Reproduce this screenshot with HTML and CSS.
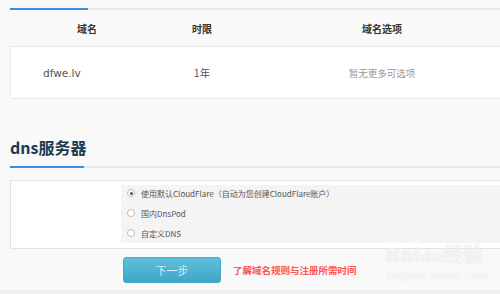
FILE: index.html
```html
<!DOCTYPE html>
<html lang="zh-CN">
<head>
<meta charset="utf-8">
<title>域名注册</title>
<link rel="stylesheet" href="styles.css">
</head>
<body>
<div class="page">
  <div class="tabbar"><div class="tab-active"></div></div>
  <div class="thead">
    <div class="th">域名</div>
    <div class="th">时限</div>
    <div class="th th-opt">域名选项</div>
  </div>
  <div class="trow">
    <div class="td td-name">dfwe.lv</div>
    <div class="td td-term">1年</div>
    <div class="td td-opt">暂无更多可选项</div>
  </div>

  <h2 class="section-title">dns服务器</h2>
  <div class="tabbar"><div class="tab-active short"></div></div>

  <div class="dns-box">
    <div class="dns-panel">
      <label class="radio-row"><span class="radio checked"></span><span class="radio-text">使用默认CloudFlare（自动为您创建CloudFlare账户）</span></label>
      <label class="radio-row"><span class="radio"></span><span class="radio-text">国内DnsPod</span></label>
      <label class="radio-row"><span class="radio"></span><span class="radio-text">自定义DNS</span></label>
    </div>
  </div>

  <div class="actions">
    <button class="btn-next">下一步</button>
    <a class="rule-link">了解域名规则与注册所需时间</a>
  </div>
  <div class="footer-strip"></div>

  <div class="watermark">
    <div class="wm-logo">Bai<span class="wm-du">du</span>经验</div>
    <div class="wm-url">jingyan.baidu.com</div>
  </div>
</div>
</body>
</html>
```

FILE: styles.css
```css
html, body {
  margin: 0;
  padding: 0;
}
body {
  background: #f9f9f9;
  width: 500px;
  height: 294px;
  overflow: hidden;
  font-family: "Noto Sans CJK SC", "DejaVu Sans", sans-serif;
}
.page {
  position: relative;
  width: 500px;
  height: 294px;
  overflow: hidden;
  padding-top: 8px;
  box-sizing: border-box;
}
.tabbar {
  margin-left: 10px;
  height: 2px;
  background: #e7e7e7;
}
.tab-active {
  width: 78px;
  height: 2px;
  background: #3b8fe0;
}
.tab-active.short {
  width: 74px;
}
.thead {
  margin-left: 10px;
  display: grid;
  grid-template-columns: 154px 76px 1fr;
  height: 36px;
  align-items: center;
}
.th {
  text-align: center;
  font-size: 10px;
  font-weight: bold;
  color: #333;
}
.th-opt {
  padding-left: 24px;
}
.trow {
  margin-left: 10px;
  width: 490px;
  box-sizing: border-box;
  display: grid;
  grid-template-columns: 153px 76px 1fr;
  height: 53px;
  align-items: center;
  background: #fff;
  border: 1px solid #e8e8e8;
  border-right: none;
}
.td {
  text-align: center;
  font-size: 10px;
  color: #555;
}
.td-name {
  text-align: left;
  padding-left: 32px;
  font-family: "DejaVu Sans", sans-serif;
  font-size: 10.5px;
}
.td-term {
  font-size: 10.5px;
}
.td-opt {
  color: #999;
  font-size: 9.5px;
  padding-left: 24px;
}
.section-title {
  margin: 38px 0 0 10px;
  height: 29px;
  font-size: 16px;
  line-height: 20px;
  font-weight: bold;
  color: #1b3a52;
}
.dns-box {
  margin: 12px 0 0 10px;
  width: 490px;
  height: 69px;
  box-sizing: border-box;
  background: #fff;
  border: 1px solid #e2e2e2;
  border-right: none;
  padding-top: 4px;
  padding-left: 110px;
}
.dns-panel {
  height: 58px;
  box-sizing: border-box;
  background: #f4f4f4;
  display: flex;
  flex-direction: column;
  gap: 4px;
}
.radio-row {
  height: 16px;
  display: flex;
  align-items: center;
}
.radio {
  width: 6px;
  height: 6px;
  margin-left: 6px;
  border: 1px solid #bdbdbd;
  border-radius: 50%;
  background: #fff;
  box-sizing: content-box;
  position: relative;
  flex: none;
}
.radio.checked::after {
  content: "";
  position: absolute;
  left: 1.5px;
  top: 1.5px;
  width: 3px;
  height: 3px;
  border-radius: 50%;
  background: #555;
}
.radio-text {
  margin-left: 6px;
  font-size: 8px;
  color: #555;
  white-space: nowrap;
}
.actions {
  margin: 8px 0 0 123px;
  display: flex;
  align-items: center;
}
.btn-next {
  width: 98px;
  height: 26px;
  border: 1px solid #47a9c9;
  border-radius: 3px;
  background: linear-gradient(#5dc0dc, #40a6c7);
  color: #d6eef6;
  font-family: "Noto Sans CJK SC", sans-serif;
  font-size: 11px;
  padding: 0;
}
.rule-link {
  margin-left: 12px;
  font-size: 9.5px;
  font-weight: bold;
  color: #ff5252;
}
.footer-strip {
  margin-top: 7px;
  height: 10px;
  background: #efefef;
}
.watermark {
  position: absolute;
  left: 385px;
  top: 243px;
  color: rgba(255, 255, 255, 0.6);
  text-shadow: 0 0 1px rgba(190, 190, 190, 0.45);
  pointer-events: none;
}
.wm-logo {
  font-family: "DejaVu Sans", sans-serif;
  font-size: 20px;
  font-weight: bold;
  line-height: 24px;
}
.wm-du {
  font-size: 16px;
}
.wm-url {
  font-family: "DejaVu Sans", sans-serif;
  font-size: 11px;
  line-height: 14px;
  margin-left: 2px;
}
```
